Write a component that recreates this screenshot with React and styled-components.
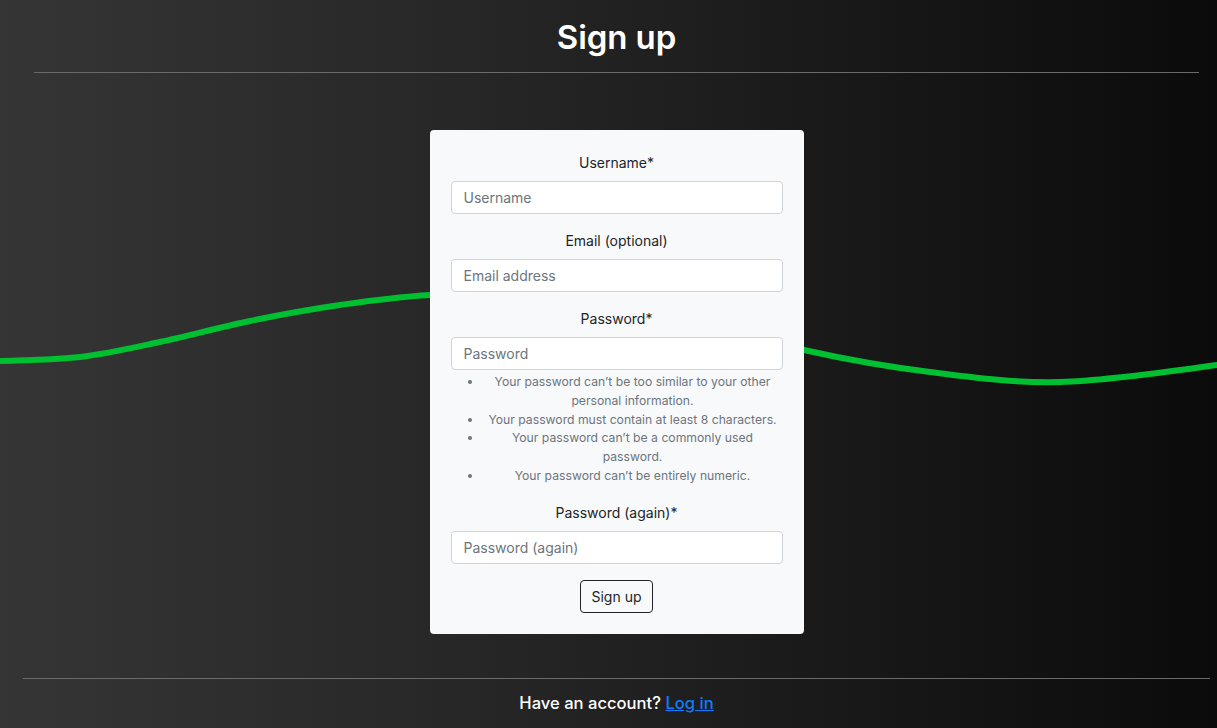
import React from "react";
import styled, { createGlobalStyle } from "styled-components";

const GlobalStyle = createGlobalStyle`
  html, body { margin: 0; padding: 0; }
  body {
    font-family: Inter, "Liberation Sans", Arial, sans-serif;
    background: linear-gradient(90deg, #353535 0%, #262626 40%, #161616 75%, #0b0b0b 100%);
    min-height: 100vh;
    color: #212529;
  }
  * { box-sizing: border-box; }
`;

const Page = styled.div`
  position: relative;
  min-height: 728px;
  padding-left: 16px;
  overflow: hidden;
`;

const WaveLayer = styled.svg`
  position: absolute;
  left: 0;
  top: 0;
  width: 1217px;
  height: 728px;
  z-index: 0;
  pointer-events: none;
`;

const Content = styled.div`
  position: relative;
  z-index: 1;
  display: flex;
  flex-direction: column;
  align-items: center;
  padding-top: 18px;
`;

const Title = styled.h1`
  margin: 0;
  font-size: 33px;
  line-height: 38px;
  font-weight: 600;
  color: #fff;
  letter-spacing: -0.1px;
`;

const Rule = styled.hr`
  align-self: stretch;
  border: 0;
  border-top: 1px solid #6a6a6a;
  margin: ${(p) => p.$top}px ${(p) => p.$side}px 0;
`;

const Card = styled.form`
  width: 374px;
  margin-top: 57px;
  padding: 22px 21px 21px;
  background: #f8f9fa;
  border-radius: 4px;
  text-align: center;
  display: flex;
  flex-direction: column;
  align-items: stretch;
`;

const Field = styled.div`
  display: flex;
  flex-direction: column;
  margin-bottom: 16px;
`;

const Label = styled.label`
  font-size: 14px;
  line-height: 21px;
  margin-bottom: 8px;
  color: #212529;
`;

const Input = styled.input`
  height: 33px;
  width: 100%;
  padding: 0 12px;
  border: 1px solid #ced4da;
  border-radius: 4px;
  background: #fff;
  font-family: inherit;
  font-size: 14px;
  color: #212529;
  outline: none;
  &::placeholder { color: #6c757d; }
`;

const HelpList = styled.ul`
  margin: 3px 0 0;
  padding-left: 32px;
  font-size: 12.2px;
  line-height: 18.75px;
  color: #6c757d;
  text-align: center;
`;

const SubmitButton = styled.button`
  align-self: center;
  height: 33px;
  padding: 0 10px;
  border: 1px solid #212529;
  border-radius: 4px;
  background: transparent;
  font-family: inherit;
  font-size: 14px;
  color: #212529;
  cursor: pointer;
`;

const Footer = styled.p`
  margin: 12px 0 0;
  font-size: 16.6px;
  line-height: 24px;
  font-weight: 500;
  color: #fff;
`;

const Link = styled.a`
  color: #0d7dff;
  text-decoration: underline;
`;

const wavePoints = [
  [-40, 362], [0, 361], [80, 357], [160, 342], [250, 321], [340, 305], [430, 295],
  [560, 292], [690, 318], [804, 350], [930, 372], [1060, 382], [1217, 365], [1260, 355],
];

function catmullRom(pts) {
  let d = `M${pts[0][0]},${pts[0][1]}`;
  for (let i = 0; i < pts.length - 1; i++) {
    const p0 = pts[i - 1] || pts[i];
    const p1 = pts[i];
    const p2 = pts[i + 1];
    const p3 = pts[i + 2] || p2;
    const c1x = p1[0] + (p2[0] - p0[0]) / 6;
    const c1y = p1[1] + (p2[1] - p0[1]) / 6;
    const c2x = p2[0] - (p3[0] - p1[0]) / 6;
    const c2y = p2[1] - (p3[1] - p1[1]) / 6;
    d += ` C${c1x.toFixed(1)},${c1y.toFixed(1)} ${c2x.toFixed(1)},${c2y.toFixed(1)} ${p2[0]},${p2[1]}`;
  }
  return d;
}

const fields = [
  { id: "username", label: "Username*", placeholder: "Username", type: "text" },
  { id: "email", label: "Email (optional)", placeholder: "Email address", type: "email" },
  {
    id: "password1",
    label: "Password*",
    placeholder: "Password",
    type: "password",
    help: [
      "Your password can’t be too similar to your other personal information.",
      "Your password must contain at least 8 characters.",
      "Your password can’t be a commonly used password.",
      "Your password can’t be entirely numeric.",
    ],
  },
  { id: "password2", label: "Password (again)*", placeholder: "Password (again)", type: "password" },
];

export default function App() {
  return (
    <>
      <GlobalStyle />
      <Page>
        <WaveLayer viewBox="0 0 1217 728" aria-hidden="true">
          <path d={catmullRom(wavePoints)} fill="none" stroke="#00bf31" strokeWidth="6" />
        </WaveLayer>
        <Content>
          <Title>Sign up</Title>
          <Rule $top={16} $side={18} />
          <Card onSubmit={(e) => e.preventDefault()}>
            {fields.map((f) => (
              <Field key={f.id}>
                <Label htmlFor={f.id}>{f.label}</Label>
                <Input id={f.id} type={f.type} placeholder={f.placeholder} />
                {f.help && (
                  <HelpList>
                    {f.help.map((h) => (
                      <li key={h}>{h}</li>
                    ))}
                  </HelpList>
                )}
              </Field>
            ))}
            <SubmitButton type="submit">Sign up</SubmitButton>
          </Card>
          <Rule $top={44} $side={7} />
          <Footer>
            Have an account? <Link href="#">Log in</Link>
          </Footer>
        </Content>
      </Page>
    </>
  );
}
